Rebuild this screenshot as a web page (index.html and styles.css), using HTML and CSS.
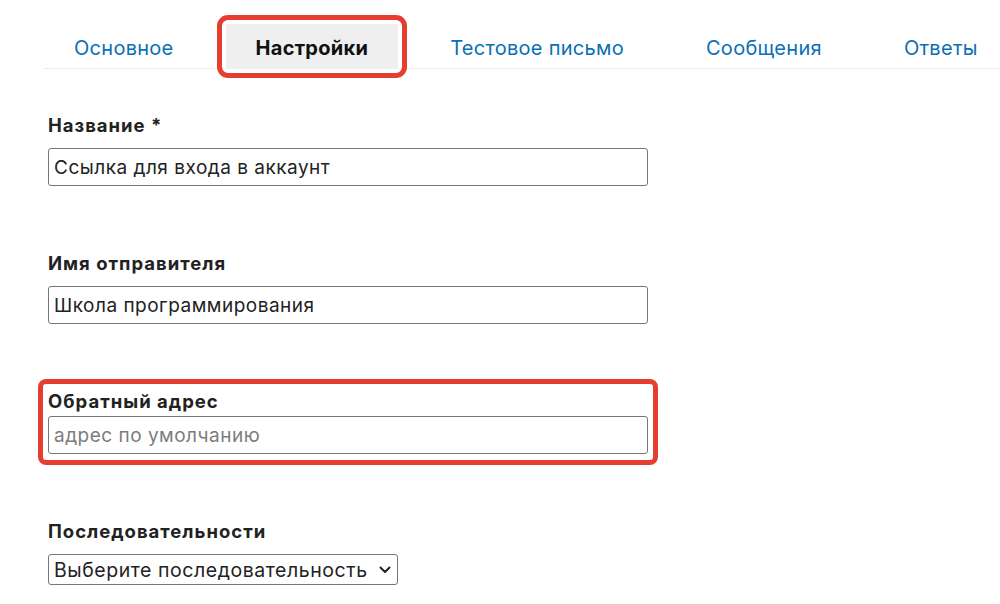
FILE: index.html
```html
<!DOCTYPE html>
<html lang="ru">
<head>
<meta charset="utf-8">
<title>Настройки</title>
<link rel="stylesheet" href="styles.css">
</head>
<body>
<div class="page">
  <nav class="tabs">
    <a class="tab" href="#">Основное</a>
    <a class="tab tab-active" href="#">Настройки</a>
    <a class="tab" href="#">Тестовое письмо</a>
    <a class="tab" href="#">Сообщения</a>
    <a class="tab" href="#">Ответы</a>
  </nav>
  <form class="form">
    <div class="field">
      <label class="label">Название *</label>
      <input class="input" type="text" value="Ссылка для входа в аккаунт">
    </div>
    <div class="field">
      <label class="label">Имя отправителя</label>
      <input class="input" type="text" value="Школа программирования">
    </div>
    <div class="field field-tight field-marked">
      <label class="label">Обратный адрес</label>
      <input class="input" type="text" placeholder="адрес по умолчанию">
    </div>
    <div class="field">
      <label class="label">Последовательности</label>
      <div class="select-wrap">
        <select class="select">
          <option>Выберите последовательность</option>
        </select>
        <svg class="chevron" viewBox="0 0 12 8" width="12" height="8"><path d="M1.5 1.5 L6 6 L10.5 1.5" fill="none" stroke="#222" stroke-width="2" stroke-linecap="round" stroke-linejoin="round"/></svg>
      </div>
    </div>
  </form>
</div>
</body>
</html>
```
FILE: styles.css
```css
* { box-sizing: border-box; }
html, body { margin: 0; padding: 0; background: #fff; }
body {
  font-family: Inter, "Noto Sans", "Liberation Sans", sans-serif;
  color: #222;
}
.page {
  padding: 24px 0 0 44px;
}
.tabs {
  display: flex;
  gap: 22px;
  border-bottom: 1px solid #ebebeb;
  height: 45px;
}
.tab {
  display: flex;
  align-items: center;
  padding: 2px 30px 0;
  height: 45px;
  font-size: 20px;
  letter-spacing: 0.28px;
  color: #0b6fb5;
  text-decoration: none;
  white-space: nowrap;
}
.tab-active {
  background: #efefef;
  color: #111;
  font-weight: 700;
  outline: 5px solid #e53e30;
  outline-offset: 4px;
  border-radius: 2px;
}
.form {
  padding: 45px 0 0 4px;
  display: flex;
  flex-direction: column;
  gap: 66px;
}
.field {
  display: flex;
  flex-direction: column;
  gap: 12px;
  width: 600px;
  position: relative;
}
.field-tight { gap: 4px; }
.field-marked::after {
  content: "";
  position: absolute;
  left: -10px;
  right: -10px;
  top: -11px;
  bottom: -11px;
  border: 5px solid #e53e30;
  border-radius: 8px;
  pointer-events: none;
}
.label {
  font-size: 18.5px;
  line-height: 22px;
  font-weight: 700;
  letter-spacing: 1px;
  color: #222;
}
.input {
  width: 600px;
  height: 38px;
  border: 1px solid #767676;
  border-radius: 3px;
  padding: 0 5px;
  font-family: inherit;
  font-size: 19px;
  letter-spacing: 0.5px;
  color: #222;
  background: #fff;
}
.input::placeholder { color: #7c7c7c; }
.select-wrap {
  position: relative;
  width: 350px;
}
.select {
  appearance: none;
  -webkit-appearance: none;
  width: 350px;
  height: 31px;
  border: 1px solid #767676;
  border-radius: 3px;
  padding: 0 5px;
  font-family: inherit;
  font-size: 19.5px;
  letter-spacing: 0.55px;
  color: #222;
  background: #fff;
}
.chevron {
  position: absolute;
  right: 7px;
  top: 12px;
  pointer-events: none;
}
```
